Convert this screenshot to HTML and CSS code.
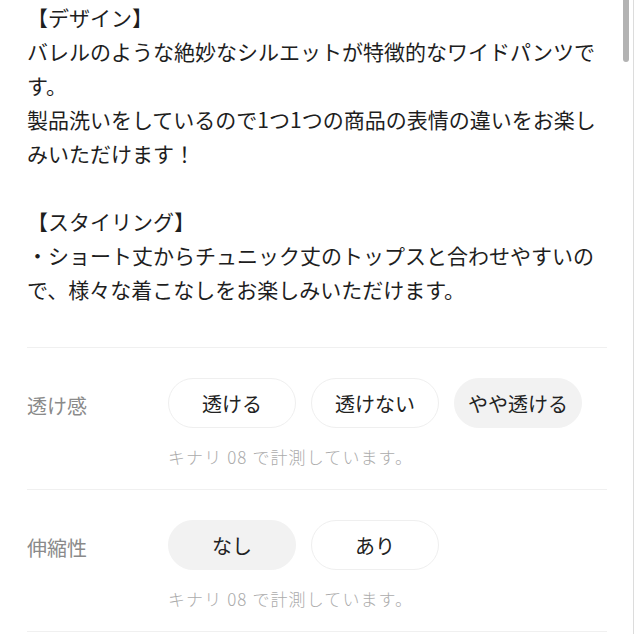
FILE: index.html
```html
<!DOCTYPE html>
<html lang="ja">
<head>
<meta charset="utf-8">
<title>商品説明</title>
<link rel="stylesheet" href="styles.css">
</head>
<body>
<div class="page">
  <div class="desc">
    <p class="desc-text">【デザイン】<br>バレルのような絶妙なシルエットが特徴的なワイドパンツです。<br>製品洗いをしているので1つ1つの商品の表情の違いをお楽しみいただけます！<br><br>【スタイリング】<br>・ショート丈からチュニック丈のトップスと合わせやすいので、様々な着こなしをお楽しみいただけます。</p>
  </div>
  <div class="spec">
    <div class="row">
      <div class="label">透け感</div>
      <div class="body">
        <div class="pills">
          <span class="pill">透ける</span>
          <span class="pill">透けない</span>
          <span class="pill is-active">やや透ける</span>
        </div>
        <p class="note">キナリ 08 で計測しています。</p>
      </div>
    </div>
    <div class="row">
      <div class="label">伸縮性</div>
      <div class="body">
        <div class="pills">
          <span class="pill is-active">なし</span>
          <span class="pill">あり</span>
        </div>
        <p class="note">キナリ 08 で計測しています。</p>
      </div>
    </div>
  </div>
</div>
<div class="scroll-edge"></div>
<div class="scroll-thumb"></div>
</body>
</html>
```
FILE: styles.css
```css
html, body {
  margin: 0;
  padding: 0;
  background: #ffffff;
}
body {
  font-family: "Noto Sans CJK JP", "Noto Sans", sans-serif;
  color: #1e1e1e;
  overflow: hidden;
}
.page {
  padding: 0 27px;
}
.desc-text {
  margin: 0;
  font-size: 21px;
  line-height: 34px;
}
.desc {
  padding-bottom: 41px;
}
.spec {
  border-top: 1px solid #f0f0f0;
}
.row {
  display: grid;
  grid-template-columns: 141px 1fr;
  padding: 30px 0 19px;
  border-bottom: 1px solid #f0f0f0;
}
.label {
  font-size: 20px;
  line-height: 50px;
  padding-top: 3px;
  color: #8a8a8a;
}
.pills {
  display: flex;
  gap: 15px;
}
.pill {
  box-sizing: border-box;
  width: 128px;
  height: 50px;
  border-radius: 25px;
  border: 1px solid #efefef;
  background: #ffffff;
  display: flex;
  align-items: center;
  justify-content: center;
  font-size: 20px;
  color: #222222;
}
.pill.is-active {
  background: #f2f2f2;
  border-color: #f2f2f2;
}
.note {
  margin: 16px 0 0;
  font-size: 17px;
  line-height: 26px;
  letter-spacing: 1.1px;
  color: #ababab;
  font-weight: 300;
}
.scroll-edge {
  position: fixed;
  top: 0;
  right: 0;
  width: 1px;
  height: 100%;
  background: #dcdcdc;
}
.scroll-thumb {
  position: fixed;
  top: 0;
  right: 5px;
  width: 6px;
  height: 62px;
  border-radius: 0 0 3px 3px;
  background: #b3b3b3;
}
```
